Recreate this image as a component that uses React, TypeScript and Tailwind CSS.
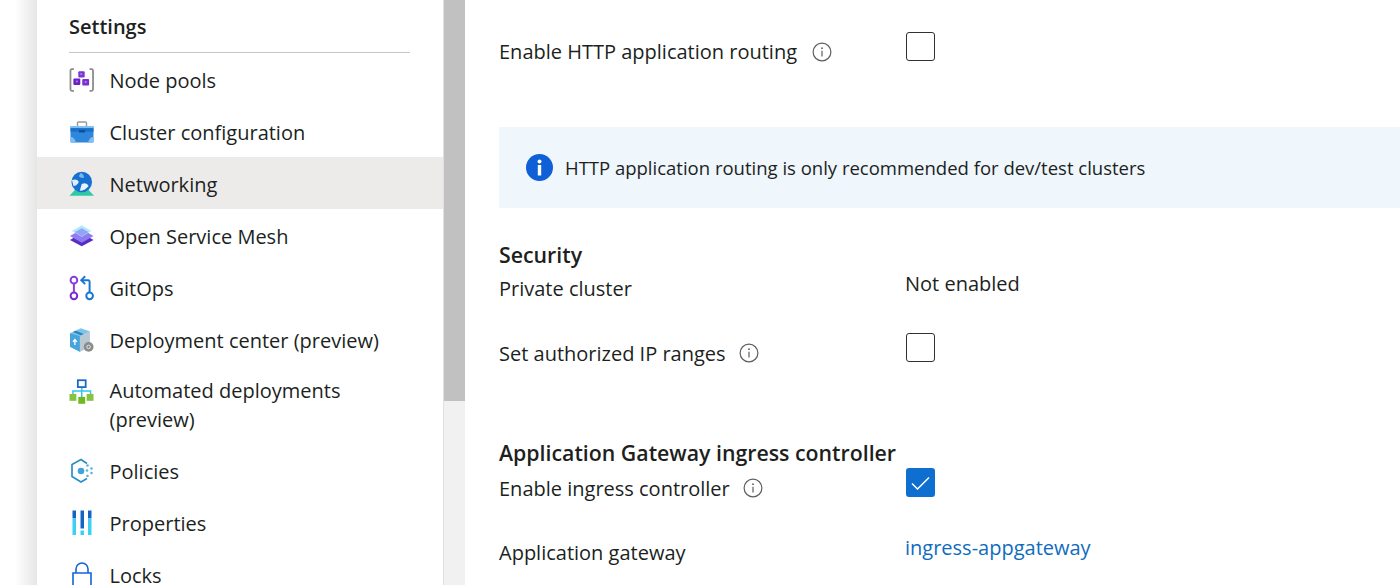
import React from 'react';

const NodePoolsIcon = () => (
  <svg width="26" height="26" viewBox="0 0 26 26">
    <path d="M5 2H3Q1.500 2 1.500 3.500V22.500Q1.500 24 3 24H5" fill="none" stroke="#8a8a8a" strokeWidth="1.800" />
    <path d="M21 2H23Q24.500 2 24.500 3.500V22.500Q24.500 24 23 24H21" fill="none" stroke="#8a8a8a" strokeWidth="1.800" />
    <rect x="9.500" y="4" width="6.500" height="6.500" rx="1" fill="#7a35d2" />
    <rect x="4.500" y="11.500" width="7" height="6.500" rx="1" fill="#6a1fc0" />
    <rect x="13.500" y="12" width="7" height="6.500" rx="1" fill="#7a2fd0" />
    <rect x="11.500" y="6" width="2" height="2" fill="#a77be8" />
    <rect x="7" y="13.500" width="2" height="2" fill="#a77be8" />
    <rect x="16" y="14" width="2" height="2" fill="#a77be8" />
  </svg>
);

const ClusterConfigIcon = () => (
  <svg width="24" height="22" viewBox="0 0 24 22">
    <path d="M7.500 5V2Q7.500 1 8.500 1H15.500Q16.500 1 16.500 2V5" fill="none" stroke="#9a9a9a" strokeWidth="1.400" />
    <rect x="0.500" y="5" width="23" height="16.500" rx="1" fill="#2f87dc" />
    <rect x="0.500" y="5" width="23" height="2.200" fill="#7fc0f2" />
    <rect x="0.500" y="7.200" width="23" height="3.500" fill="#1a6fc9" />
    <rect x="9" y="9" width="6" height="2.500" fill="#0d4f9a" />
    <path d="M0.500 21.500V16Q4 15.500 6 21.500Z" fill="#80bdf0" />
    <path d="M23.500 21.500V16Q20 15.500 18 21.500Z" fill="#80bdf0" />
  </svg>
);

const NetworkingIcon = () => (
  <svg width="26" height="26" viewBox="0 0 26 26">
    <path d="M0.500 25L6 19H20L25.500 25Z" fill="#2fc9a8" />
    <circle cx="13" cy="11" r="10.500" fill="#1770cf" />
    <path d="M3 9Q9 7 10 11Q8 15 4.500 15Z" fill="#dbeefc" />
    <path d="M13 13Q18 11 20 15Q16 20 11 20Z" fill="#e8f3fc" />
    <path d="M12 1.500Q16 4 15 7Q12 7 10 5Z" fill="#7db7ea" />
  </svg>
);

const MeshIcon = () => (
  <svg width="26" height="24" viewBox="0 0 26 24">
    <path d="M13 9L25 16L13 22.500L1 16Z" fill="#5b2cc4" />
    <path d="M13 5L25 12L13 19L1 12Z" fill="#8f7cf2" />
    <path d="M13 1L23 7L13 13L3 7Z" fill="#a5e6fa" opacity="0.850" />
    <path d="M13 4L20 8L13 12.500L6 8Z" fill="#96a2f7" />
  </svg>
);

const GitOpsIcon = () => (
  <svg width="26" height="26" viewBox="0 0 26 26" fill="none" strokeWidth="2">
    <circle cx="5" cy="5" r="3.400" stroke="#8a3ce0" />
    <circle cx="5" cy="21" r="3.400" stroke="#7a28d0" />
    <path d="M5 8.500V17.500" stroke="#8a3ce0" />
    <circle cx="21" cy="21" r="3.400" stroke="#1775d5" />
    <path d="M21 17.500V6.500Q21 5 19.500 5H13" stroke="#1775d5" />
    <path d="M16.500 1L12.500 5L16.500 9" stroke="#1775d5" />
  </svg>
);

const DeploymentIcon = () => (
  <svg width="26" height="26" viewBox="0 0 26 26">
    <path d="M1 6L12 1L21 4V20L11 25L1 20Z" fill="#7cc4ea" />
    <path d="M11 9L21 4V20L11 25Z" fill="#b9c9d4" />
    <path d="M1 6L11 9V25L1 20Z" fill="#48a5dc" />
    <path d="M4 4.800L7 3.500L15 7L12 8.200Z" fill="#2684c4" />
    <path d="M6 18V13M4 15L6 12.500L8 15" fill="none" stroke="#fff" strokeWidth="1.300" />
    <circle cx="20" cy="20" r="5" fill="#8b8b8b" />
    <circle cx="20" cy="20" r="1.800" fill="none" stroke="#e6e6e6" strokeWidth="1" />
  </svg>
);

const AutomatedIcon = () => (
  <svg width="26" height="26" viewBox="0 0 26 26">
    <path d="M13 8V18M4 15V12H22V15" fill="none" stroke="#35c4ee" strokeWidth="1.500" />
    <rect x="9" y="1" width="8" height="7" fill="#fff" stroke="#1668c7" strokeWidth="1.800" />
    <rect x="0.500" y="15" width="7" height="7" fill="#86c440" />
    <rect x="9.500" y="18" width="7" height="7" fill="#6fb81e" />
    <rect x="18" y="15" width="7" height="7" fill="#86c440" />
  </svg>
);

const PoliciesIcon = () => (
  <svg width="24" height="26" viewBox="0 0 24 26">
    <path d="M17 5.500L11 1.500L2 6.500V18.500L11 24L17 20.500" fill="none" stroke="#2a8fc9" strokeWidth="1.700" />
    <circle cx="11" cy="13" r="3.300" fill="#3fa5d8" />
    <circle cx="17.500" cy="7.500" r="1.300" fill="#5ab4e0" />
    <circle cx="21.500" cy="10.500" r="1.300" fill="#5ab4e0" />
    <circle cx="17" cy="12.500" r="1.300" fill="#5ab4e0" />
    <circle cx="21.500" cy="15" r="1.300" fill="#5ab4e0" />
    <circle cx="17.500" cy="18" r="1.300" fill="#5ab4e0" />
  </svg>
);

const PropertiesIcon = () => (
  <svg width="20" height="26" viewBox="0 0 20 26">
    <rect x="0.500" y="0.500" width="3.500" height="8" fill="#1464c8" />
    <rect x="0.500" y="9" width="3.500" height="16" fill="#3cd0f5" />
    <rect x="8.500" y="0.500" width="3.500" height="18" fill="#1464c8" />
    <rect x="8.500" y="20.500" width="3.500" height="4.500" fill="#3cd0f5" />
    <rect x="16" y="0.500" width="3.500" height="8" fill="#1464c8" />
    <rect x="16" y="9" width="3.500" height="16" fill="#3cd0f5" />
  </svg>
);

const LockIcon = () => (
  <svg width="20" height="26" viewBox="0 0 20 26" className="overflow-visible">
    <path d="M4 11V7A6 6 0 0 1 16 7V11" fill="none" stroke="#1464d8" strokeWidth="1.600" />
    <path d="M1 30V11H19V30" fill="none" stroke="#1464d8" strokeWidth="1.600" />
  </svg>
);

const InfoOutline = () => (
  <svg width="20" height="20" viewBox="0 0 20 20" fill="none" className="shrink-0">
    <circle cx="10" cy="10" r="8.900" stroke="#605e5c" strokeWidth="1.200" />
    <path d="M10 8.800V14.500" stroke="#605e5c" strokeWidth="1.200" />
    <circle cx="10" cy="6.200" r="0.900" fill="#605e5c" />
  </svg>
);

const menuItems = [
  { label: 'Node pools', icon: <NodePoolsIcon /> },
  { label: 'Cluster configuration', icon: <ClusterConfigIcon /> },
  { label: 'Networking', icon: <NetworkingIcon />, active: true },
  { label: 'Open Service Mesh', icon: <MeshIcon /> },
  { label: 'GitOps', icon: <GitOpsIcon /> },
  { label: 'Deployment center (preview)', icon: <DeploymentIcon /> },
];

const MenuRow = ({ label, icon, active }: { label: string; icon: React.ReactNode; active?: boolean }) => (
  <div className={`h-[52px] flex items-center pl-[32px] ${active ? 'bg-[#edebe9]' : ''}`}>
    <span className="w-[40.500px] flex justify-center shrink-0 pr-[15px] mt-[2px]">{icon}</span>
    <span className="mt-[4px]">{label}</span>
  </div>
);

const Checkbox = ({ checked }: { checked?: boolean }) =>
  checked ? (
    <div className="ml-px w-[29px] h-[29px] rounded-[3px] bg-[#0f6fd0] flex items-center justify-center">
      <svg width="19" height="14" viewBox="0 0 19 14" fill="none">
        <path d="M1 7.500L6.500 13L18 1.500" stroke="#fff" strokeWidth="1.500" />
      </svg>
    </div>
  ) : (
    <div className="ml-px w-[29px] h-[29px] rounded-[3px] border-[1.500px] border-[#323130] bg-white" />
  );

export default function App() {
  return (
    <div className="w-[1400px] h-[585px] overflow-hidden flex bg-white text-[#201f1e] text-[20px] leading-[28px] font-['Open_Sans','Noto_Sans',sans-serif]">
      <div className="w-[37px] shrink-0 bg-gradient-to-r from-white from-[40%] to-[#e6e6e6]" />

      <div className="w-[406px] shrink-0">
        <div className="pl-[32px] pr-[33px] pt-[13px]">
          <div className="font-semibold border-b border-[#c8c6c4] h-[40px]">Settings</div>
        </div>
        <div>
          {menuItems.map((item) => (
            <MenuRow key={item.label} {...item} />
          ))}
          <div className="h-[79px] flex pl-[32px] pt-[12px]">
            <span className="w-[40.500px] flex justify-center shrink-0 pr-[15px] pt-[2px]"><AutomatedIcon /></span>
            <span className="leading-[28.500px]">Automated deployments<br />(preview)</span>
          </div>
          <MenuRow label="Policies" icon={<PoliciesIcon />} />
          <MenuRow label="Properties" icon={<PropertiesIcon />} />
          <MenuRow label="Locks" icon={<LockIcon />} />
        </div>
      </div>

      <div className="w-[22px] shrink-0 bg-[#f1f1f1] border-l border-[#e1e1e1]">
        <div className="h-[401px] bg-[#c1c1c1]" />
      </div>

      <div className="flex-1 pl-[34px] pt-[31px]">
        <div className="flex h-[96px]">
          <div className="w-[406px] flex items-start pt-[7px]">
            <span>Enable HTTP application routing</span>
            <span className="ml-[15px] mt-[4px]"><InfoOutline /></span>
          </div>
          <div className="pt-px"><Checkbox /></div>
        </div>

        <div className="h-[81px] bg-[#eff6fc] flex items-center pl-[27px]">
          <svg width="27" height="27" viewBox="0 0 27 27" className="shrink-0">
            <circle cx="13.500" cy="13.500" r="13.500" fill="#0f5fd6" />
            <circle cx="13.500" cy="7.500" r="2" fill="#fff" />
            <rect x="11.800" y="11" width="3.400" height="10.500" fill="#fff" />
          </svg>
          <span className="ml-[12px] text-[18.500px]">HTTP application routing is only recommended for dev/test clusters</span>
        </div>

        <div className="font-semibold text-[21.300px] pt-[33px]">Security</div>
        <div className="flex h-[33px] pt-[6px]">
          <div className="w-[406px]">Private cluster</div>
          <div className="-mt-[5px]">Not enabled</div>
        </div>
        <div className="flex h-[137px] pt-[31px]">
          <div className="w-[406px] flex items-start">
            <span className="pt-[7px]">Set authorized IP ranges</span>
            <span className="ml-[13px] mt-[10px]"><InfoOutline /></span>
          </div>
          <Checkbox />
        </div>

        <div className="font-semibold text-[21.300px]">Application Gateway ingress controller</div>
        <div className="flex h-[72px] pt-[1px]">
          <div className="w-[406px] flex items-start">
            <span className="pt-[7px]">Enable ingress controller</span>
            <span className="ml-[13px] mt-[10px]"><InfoOutline /></span>
          </div>
          <Checkbox checked />
        </div>
        <div className="flex">
          <div className="w-[406px]">Application gateway</div>
          <div className="-mt-[5px] text-[#0f6cbd]">ingress-appgateway</div>
        </div>
      </div>
    </div>
  );
}
